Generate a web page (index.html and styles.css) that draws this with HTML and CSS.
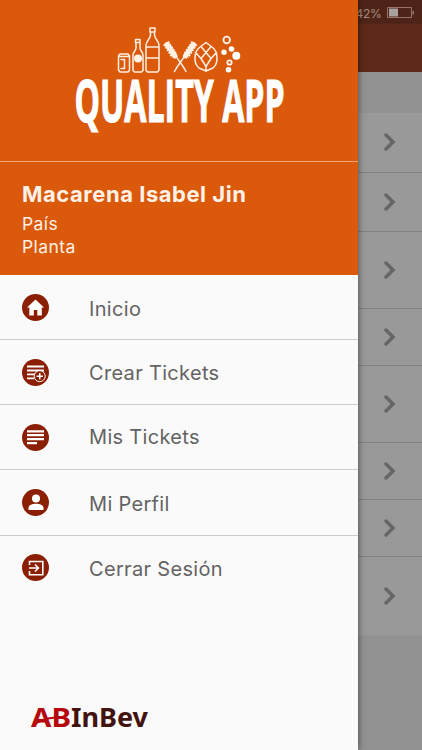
FILE: index.html
```
<!DOCTYPE html>
<html lang="es">
<head>
<meta charset="utf-8">
<title>Quality App</title>
<link rel="stylesheet" href="styles.css">
</head>
<body>
<div class="screen">
  <aside class="drawer">
    <header class="brand">
      <svg class="logo" width="358" height="161" viewBox="0 0 358 161">
        <g fill="none" stroke="#fff0e4" stroke-width="1.500" stroke-linejoin="round" stroke-linecap="round">
          <path d="M120 54h8l1.500 2v14l-1.500 2H120l-1.500-2V56zM119 56.500h10M121 59.500h3.500v9H121"/>
          <path d="M135.500 39.500h4.500v3h-4.500zM136 43v5c0 3-3 4-3 7v15.500l1.500 1.500h7l1.500-1.500V55c0-3-3-4-3-7v-5"/>
          <path d="M150 28h5v4h-5zM150.500 32v3c0 4-4.500 6-4.500 10v25l1.500 2h10l1.500-2V45c0-4-4.500-6-4.500-10v-3M146.500 47h12M146.500 58h12"/>
          <path d="M174.500 71.500c4-8 8-11 11-17M186 71.500c-4-8-8-11-11-17"/>
          <path d="M206 42.500l-6 4.500c-6 4-7 16-1 21l7 3 7-3c6-5 5-17-1-21zM206 71.500v-5M201 46.500l5 6 5-6M206 52.500l-5 6 5 8 5-8zM201 58.500l-5.500-6M211 58.500l5.500-6"/>
        </g>
        <g fill="none" stroke="#fff0e4">
          <path d="M167 44.500l8 11.500M193.500 44.500l-8 11.500" stroke-width="5" stroke-linecap="round"/>
          <path d="M166 43l8.500 13M194.500 43l-8.500 13" stroke-width="7" stroke-dasharray="2 1"/>
        </g>
        <circle cx="138" cy="58.500" r="4" fill="#fff4ea"/>
        <g fill="#fff"><circle cx="224" cy="52.300" r="2.700"/><circle cx="231.500" cy="49" r="2.800"/><circle cx="236.300" cy="55.700" r="4"/><circle cx="228.500" cy="69.700" r="2.800"/></g>
        <g fill="none" stroke="#fff4ea" stroke-width="1.800"><circle cx="226.700" cy="40" r="3.300"/><circle cx="229.500" cy="62.500" r="2.200"/></g>
        <text class="wordmark" transform="translate(74.500 121.500) scale(.62 1)" textLength="339" lengthAdjust="spacingAndGlyphs">QUALITY APP</text>
      </svg>
    </header>
    <section class="user">
      <h1>Macarena Isabel Jin</h1>
      <p>País</p>
      <p>Planta</p>
    </section>
    <nav class="menu">
      <a class="item"><svg class="icon" viewBox="0 0 27 27"><circle cx="13.500" cy="13.500" r="13.500"/><path class="w" d="M13.500 5.500L5 13.500h2.300v8h4.500v-5.500h3.500v5.500h4.500v-8H22z"/></svg><span>Inicio</span></a>
      <a class="item"><svg class="icon" viewBox="0 0 27 27"><circle cx="13.500" cy="13.500" r="13.500"/><path class="w" d="M5 6.500h17v2H5zM5 10.500h17v2H5zM5 14.500h9v1.700H5zM5 18.500h7v1.700H5z"/><circle cx="17.700" cy="17.200" r="5.500" stroke="#fff" stroke-width="1"/><path class="w" d="M17 14h1.500v2.500H21V18h-2.500v2.500H17V18h-2.500v-1.500H17z"/></svg><span class="mid">Crear Tickets</span></a>
      <a class="item"><svg class="icon" viewBox="0 0 27 27"><circle cx="13.500" cy="13.500" r="13.500"/><path class="w" d="M5 6.300h17v2.200H5zM5 10.100h17v2.200H5zM5 14h17v2.200H5zM5 18h10v2.200H5z"/></svg><span class="up">Mis Tickets</span></a>
      <a class="item"><svg class="icon" viewBox="0 0 27 27"><circle cx="13.500" cy="13.500" r="13.500"/><circle class="w" cx="14" cy="9.500" r="4"/><path class="w" d="M6.500 21v-2c0-3 4-4.300 7.500-4.300s7.500 1.300 7.500 4.300v2z"/></svg><span>Mi Perfil</span></a>
      <a class="item last"><svg class="icon" viewBox="0 0 27 27"><circle cx="13.500" cy="13.500" r="13.500"/><path d="M7.500 11V7.500h13.300v13.300H7.500V17M7 14h9M13 10.500l3.500 3.500-3.500 3.500" class="line"/></svg><span>Cerrar Sesión</span></a>
    </nav>
    <footer class="company">
      <svg width="130" height="52" viewBox="0 0 130 52">
        <text x="1" y="32" class="ab" textLength="40" lengthAdjust="spacingAndGlyphs">AB</text>
        <text x="41" y="32" class="inbev" textLength="77" lengthAdjust="spacingAndGlyphs">InBev</text>
        <path d="M4 30c6-5 12-7 22-7.500" fill="none" stroke="#b5080d" stroke-width="2.200"/>
      </svg>
    </footer>
  </aside>
  <main class="page">
    <div class="bar"><span class="pct">42%</span><svg width="28" height="12" viewBox="0 0 28 12"><path d="M.5.500h24v10H.5z" fill="none" stroke="#96746a"/><path d="M2 1.500h9v8H2z" fill="#a9a19e"/><path d="M25.500 4h1.500v3.500h-1.500z" fill="#96746a"/></svg></div>
    <div class="gap"></div>
    <div class="row r60"><svg class="chev" viewBox="0 0 12 18"><path d="M2 2l7 7-7 7"/></svg></div>
    <div class="row r59"><svg class="chev" viewBox="0 0 12 18"><path d="M2 2l7 7-7 7"/></svg></div>
    <div class="row r77"><svg class="chev" viewBox="0 0 12 18"><path d="M2 2l7 7-7 7"/></svg></div>
    <div class="row r57"><svg class="chev" viewBox="0 0 12 18"><path d="M2 2l7 7-7 7"/></svg></div>
    <div class="row r77"><svg class="chev" viewBox="0 0 12 18"><path d="M2 2l7 7-7 7"/></svg></div>
    <div class="row r57"><svg class="chev" viewBox="0 0 12 18"><path d="M2 2l7 7-7 7"/></svg></div>
    <div class="row r57"><svg class="chev" viewBox="0 0 12 18"><path d="M2 2l7 7-7 7"/></svg></div>
    <div class="row r79"><svg class="chev" viewBox="0 0 12 18"><path d="M2 2l7 7-7 7"/></svg></div>
  </main>
</div>
</body>
</html>
```
FILE: styles.css
```
* { box-sizing: border-box; margin: 0; padding: 0; }
body { width: 422px; height: 750px; overflow: hidden; font-family: Inter, "Liberation Sans", sans-serif; }
.screen { display: flex; width: 422px; height: 750px; background: #929292; }
.drawer { z-index: 1; flex: none; display: flex; flex-direction: column; width: 357.500px; height: 750px; background: #fafafa; box-shadow: 0 0 7px rgba(0, 0, 0, .55); }
.brand { height: 162px; background: #da590b; border-bottom: 1px solid #f0a878; overflow: hidden; }
.logo { display: block; }
.wordmark { font: 700 59px "Open Sans", sans-serif; fill: #fff; stroke: #fff; stroke-width: 1.100px; }
.user { height: 113px; padding: 17px 22px 0; background: #da590b; color: #fff1e6; }
.user h1 { font-size: 22px; line-height: 31px; font-weight: 700; letter-spacing: .53px; margin-bottom: 3px; white-space: nowrap; }
.user p { font-size: 17.500px; line-height: 22.500px; letter-spacing: .4px; }
.menu { flex: 1; }
.item { display: flex; align-items: center; height: 65.200px; padding-left: 22px; border-bottom: 1.500px solid #cdcdcd; color: #636363; font-size: 20px; letter-spacing: .32px; }
.item:first-child { height: 65px; }
.item.last { height: 64px; border-bottom: 0; }
.item span { margin-left: 40px; padding-top: 3px; }
.item .mid { padding-top: 1px; }
.item .up { padding-top: 0; }
.icon { width: 27px; height: 27px; fill: #8a1f03; }
.icon .w { fill: #fff; }
.icon .line { fill: none; stroke: #fff; stroke-width: 1.600; }
.company { height: 55px; padding-left: 30px; }
.ab, .inbev { font: 700 27px "Noto Sans", sans-serif; }
.ab { fill: #b5080d; }
.inbev { fill: #43130f; }
.page { flex: 1; display: flex; flex-direction: column; }
.bar { display: flex; align-items: flex-start; height: 72px; padding-top: 7px; background: linear-gradient(#4f2418 0 23px, #5d2a1a 25px); }
.pct { width: 31px; margin-left: -2px; color: #a98c83; font-size: 12px; line-height: 14px; letter-spacing: -.3px; }
.gap { height: 41px; background: #929292; }
.row { flex: none; display: flex; align-items: center; padding-left: 26px; background: #999; border-bottom: 1px solid #828282; }
.row:last-child { border-bottom-color: #949494; }
.r57 { height: 57.300px; }
.r59 { height: 59px; }
.r60 { height: 59.500px; }
.r77 { height: 77px; }
.r79 { height: 79px; }
.chev { width: 12px; height: 18px; fill: none; stroke: #666; stroke-width: 3.500; stroke-linecap: round; }
```
